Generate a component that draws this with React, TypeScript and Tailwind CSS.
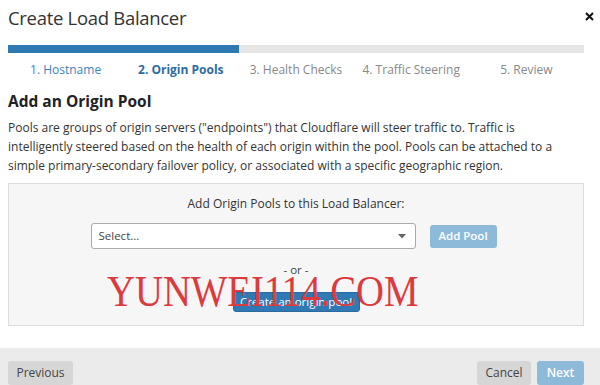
import React from "react";

export default function App() {
  const font = { fontFamily: '"Open Sans", "Noto Sans", sans-serif' };
  return (
    <div
      className="relative w-[600px] h-[385px] overflow-hidden bg-white flex flex-col text-[#333]"
      style={font}
    >
      <div className="flex items-start justify-between pl-2 pr-[6px] pt-[4px] h-[45px]">
        <div className="text-[18.5px] leading-[27px] tracking-[-0.3px] text-[#333]">Create Load Balancer</div>
        <svg width="9" height="9" viewBox="0 0 9 9" className="mt-[8px]">
          <path d="M1 1L8 8M8 1L1 8" stroke="#111" strokeWidth="2" />
        </svg>
      </div>
      <div className="ml-2 mr-4 h-2 bg-[#e6e6e6] flex">
        <div className="w-[231px] h-full bg-[#2f79b2]" />
      </div>
      <div className="ml-2 mr-4 grid grid-cols-5 text-center text-[12px] leading-[18px] mt-[8px]">
        <div className="text-[#3b84bb]">1. Hostname</div>
        <div className="text-[#2c6ca2] font-bold">2. Origin Pools</div>
        <div className="text-[#888]">3. Health Checks</div>
        <div className="text-[#888]">4. Traffic Steering</div>
        <div className="text-[#888]">5. Review</div>
      </div>
      <div className="px-2 mt-[11px] text-[15.5px] leading-[22px] font-bold text-[#222]">
        Add an Origin Pool
      </div>
      <p className="pl-2 pr-2 mt-[6px] text-[12px] leading-[19px] text-[#333] whitespace-nowrap">
        Pools are groups of origin servers ("endpoints") that Cloudflare will steer traffic to. Traffic is
        <br />
        intelligently steered based on the health of each origin within the pool. Pools can be attached to a
        <br />
        simple primary-secondary failover policy, or associated with a specific geographic region.
      </p>
      <div className="ml-2 mr-4 mt-[8px] h-[143px] border border-[#dcdcdc] bg-[#f6f6f6] flex flex-col items-center">
        <div className="mt-[11px] text-[12px] leading-[18px] text-[#333]">
          Add Origin Pools to this Load Balancer:
        </div>
        <div className="mt-[10px] flex items-center gap-[14px] ml-[-5px]">
          <div className="w-[325px] h-[26px] bg-white border border-[#aaa] rounded-[3px] flex items-center justify-between pl-[7px] pr-[9px]">
            <span className="text-[11.5px] text-[#444]">Select...</span>
            <svg width="8" height="5" viewBox="0 0 8 5">
              <path d="M0 0H8L4 4.5Z" fill="#666" />
            </svg>
          </div>
          <div className="w-[67px] h-[23px] rounded-[3px] bg-[#8dbad9] text-white text-[11.5px] font-semibold flex items-center justify-center">
            Add Pool
          </div>
        </div>
        <div className="mt-[13px] text-[11.5px] leading-[16px] text-[#444]">- or -</div>
        <div className="mt-[14px] w-[127px] h-[20px] rounded-[3px] bg-[#2f7ab5] border border-[#2a6aa0] text-white text-[11.5px] flex items-center justify-center">
          Create an origin pool
        </div>
      </div>
      <div className="mt-auto h-[37px] bg-[#ebebeb] pl-2 pr-4 pt-[13px] flex justify-between items-start">
        <div className="w-[65px] h-[24px] rounded-[3px] bg-[#d6d6d6] text-[#444] text-[12px] flex items-center justify-center">
          Previous
        </div>
        <div className="flex gap-[6px]">
          <div className="w-[54px] h-[24px] rounded-[3px] bg-[#d6d6d6] text-[#444] text-[12px] flex items-center justify-center">
            Cancel
          </div>
          <div className="w-[47px] h-[24px] rounded-[3px] bg-[#8dbad9] text-white text-[12px] font-semibold flex items-center justify-center">
            Next
          </div>
        </div>
      </div>
      <div
        className="absolute left-[107px] top-[266px] text-[45px] leading-[50px] text-[#dc3b3d] origin-left scale-x-[0.86] whitespace-nowrap pointer-events-none"
        style={{ fontFamily: '"Liberation Serif", serif' }}
      >
        YUNWEI114.COM
      </div>
    </div>
  );
}
